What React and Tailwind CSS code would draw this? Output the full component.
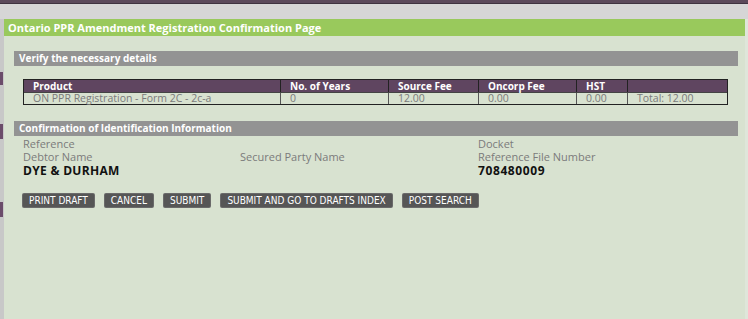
const cols = [
  { label: 'Product', value: 'ON PPR Registration - Form 2C - 2c-a', w: 'w-[256px]' },
  { label: 'No. of Years', value: '0', w: 'w-[108px]' },
  { label: 'Source Fee', value: '12.00', w: 'w-[90px]' },
  { label: 'Oncorp Fee', value: '0.00', w: 'w-[98px]' },
  { label: 'HST', value: '0.00', w: 'w-[51px]' },
  { label: '', value: 'Total: 12.00', w: 'flex-1' },
];

const buttons = ['PRINT DRAFT', 'CANCEL', 'SUBMIT', 'SUBMIT AND GO TO DRAFTS INDEX', 'POST SEARCH'];

function SectionBar({ children }) {
  return (
    <div className="ml-[10px] mr-[7px] h-[15px] bg-[#939393] pl-[5px] text-[10px] font-bold leading-[15px] text-white">
      {children}
    </div>
  );
}

export default function App() {
  return (
    <div className="relative h-[319px] w-[748px] overflow-hidden bg-[#d8e2d0] font-['Open_Sans',sans-serif]">
      {/* top chrome */}
      <div className="h-[4px] bg-[#5c4a5b] border-b border-[#3f3340]" />
      <div className="h-[15px] bg-[#d6d6d6]" />

      <div className="flex h-[300px]">
        {/* left strip */}
        <div className="relative w-[4px] bg-[#c8c8c8]">
          <div className="absolute left-0 top-[53px] h-[13px] w-[3px] bg-[#6b4c6a]" />
          <div className="absolute left-0 top-[105px] h-[15px] w-[3px] bg-[#6b4c6a]" />
          <div className="absolute left-0 top-[183px] h-[15px] w-[3px] bg-[#6b4c6a]" />
        </div>

        <div className="flex-1">
          <div className="h-[17px] bg-[#99c95c] pl-[4px] text-[11px] font-bold leading-[17px] text-white">
            Ontario PPR Amendment Registration Confirmation Page
          </div>

          <div className="pt-[15px]">
            <SectionBar>Verify the necessary details</SectionBar>
          </div>

          {/* fee table */}
          <div className="ml-[19px] mr-[17px] mt-[13px] border border-[#222]">
            <div className="flex h-[12px] bg-[#5f4560] text-[10px] font-bold leading-[12px] text-white">
              {cols.map((c, i) => (
                <div key={i} className={`${c.w} ${i > 0 ? 'border-l border-[#222]' : ''} pl-[9px]`}>
                  {c.label}
                </div>
              ))}
            </div>
            <div className="flex h-[12px] border-t border-[#444] text-[10.5px] leading-[11px] text-[#7b7b7b]">
              {cols.map((c, i) => (
                <div key={i} className={`${c.w} ${i > 0 ? 'border-l border-[#555]' : ''} pl-[9px]`}>
                  {c.value}
                </div>
              ))}
            </div>
          </div>

          <div className="pt-[16px]">
            <SectionBar>Confirmation of Identification Information</SectionBar>
          </div>

          {/* identification info */}
          <div className="ml-[19px] mr-[17px] mt-[1px] flex text-[11px] leading-[13px] text-[#7b7b7b]">
            <div className="w-[217px]">
              <div>Reference</div>
              <div>Debtor Name</div>
              <div className="mt-[1px] text-[12px] font-bold leading-[14px] tracking-[0.3px] text-[#111]">DYE &amp; DURHAM</div>
            </div>
            <div className="w-[238px] pt-[13px]">Secured Party Name</div>
            <div>
              <div>Docket</div>
              <div>Reference File Number</div>
              <div className="mt-[1px] text-[12px] font-bold leading-[14px] tracking-[0.6px] text-[#111]">708480009</div>
            </div>
          </div>

          <div className="ml-[19px] mt-[16px] flex gap-[11px]">
            {buttons.map((b) => (
              <button
                key={b}
                className="h-[13px] rounded-[1px] bg-[#565656] px-[6px] text-[10px] leading-[13px] text-white shadow-[0_0_0_1px_#6a6a6a] font-['DejaVu_Sans_Condensed','Liberation_Sans_Narrow',sans-serif]"
              >
                {b}
              </button>
            ))}
          </div>
        </div>

        <div className="w-[3px] bg-[#dfe6da]" />
      </div>
    </div>
  );
}
